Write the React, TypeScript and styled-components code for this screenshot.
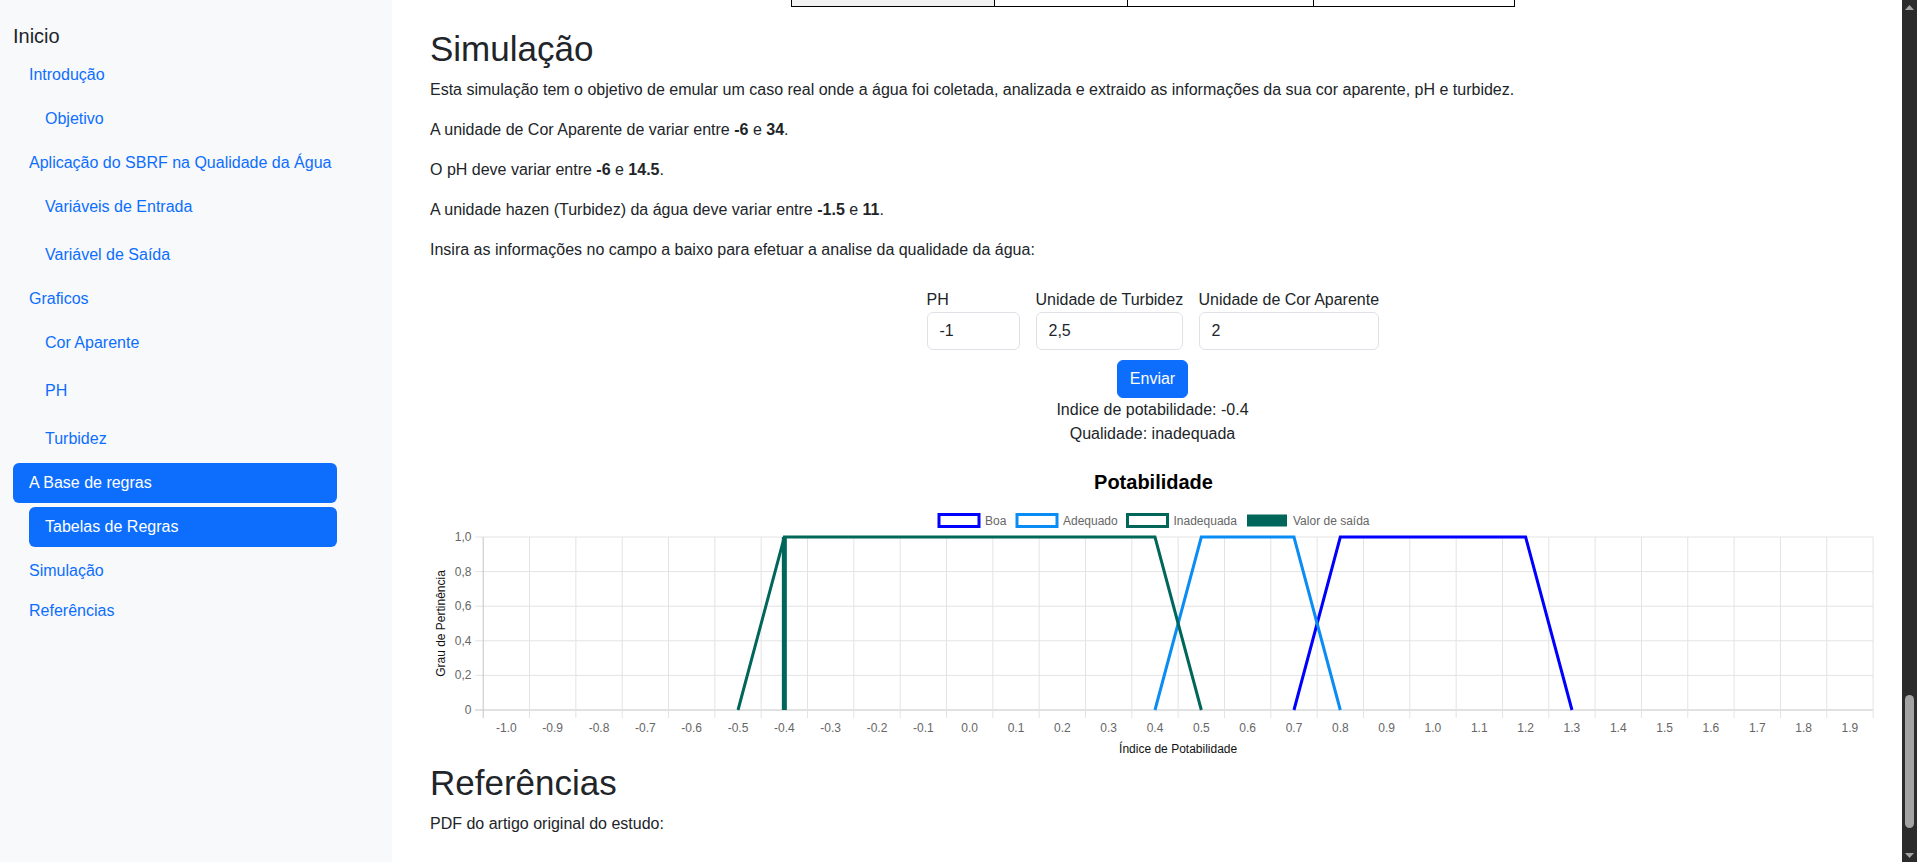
import React from 'react';
import styled, { createGlobalStyle } from 'styled-components';

const GlobalStyle = createGlobalStyle`
  html, body {
    margin: 0;
    padding: 0;
    overflow: hidden;
  }
  body {
    font-family: "Liberation Sans", Arial, sans-serif;
    font-size: 16px;
    line-height: 24px;
    color: #212529;
    background: #fff;
  }
  * {
    box-sizing: border-box;
  }
`;

const Page = styled.div`
  display: flex;
  width: 1917px;
  height: 862px;
  overflow: hidden;
`;

const Sidebar = styled.nav`
  flex: none;
  width: 392px;
  background: #f8f9fa;
  padding: 21px 55px 0 13px;
`;

const Brand = styled.div`
  font-size: 20px;
  line-height: 30px;
  margin-bottom: 4px;
`;

const NavList = styled.div`
  display: flex;
  flex-direction: column;
`;

const NavLink = styled.a<{ $active?: boolean; $nested?: boolean }>`
  display: block;
  padding: 8px 16px;
  line-height: 24px;
  white-space: nowrap;
  border-radius: 6px;
  text-decoration: none;
  color: ${(p) => (p.$active ? '#fff' : '#0d6efd')};
  background: ${(p) => (p.$active ? '#0d6efd' : 'transparent')};
  margin: ${(p) => (p.$nested ? '4px 0 4px 16px' : '0')};
`;

const Main = styled.main`
  flex: 1;
  min-width: 0;
  padding: 0 27px 0 38px;
  overflow: hidden;
`;

const CutTable = styled.div`
  display: grid;
  grid-template-columns: 203px 133px 186px 201px;
  width: 724px;
  height: 7px;
  margin: 0 auto 21px;
  border-left: 1px solid #000;
  border-bottom: 1px solid #000;
`;

const CutCell = styled.div<{ $shade?: boolean }>`
  border-right: 1px solid #000;
  background: ${(p) => (p.$shade ? '#f2f2f2' : '#fff')};
`;

const SectionTitle = styled.h1`
  font-size: 35px;
  line-height: 42px;
  font-weight: 400;
  margin: 0 0 8px;
`;

const Para = styled.p`
  margin: 0 0 16px;
`;

const FormRow = styled.div`
  display: flex;
  justify-content: center;
  gap: 16px;
  margin-top: 26px;
`;

const Field = styled.label<{ $w: number }>`
  display: flex;
  flex-direction: column;
  width: ${(p) => p.$w}px;
  white-space: nowrap;
`;

const Input = styled.input`
  width: 100%;
  height: 38px;
  padding: 6px 12px;
  font: inherit;
  color: #212529;
  border: 1px solid #dee2e6;
  border-radius: 6px;
  background: #fff;
`;

const SubmitRow = styled.div`
  display: flex;
  justify-content: center;
  margin-top: 10px;
`;

const Button = styled.button`
  height: 38px;
  padding: 6px 12px;
  font: inherit;
  color: #fff;
  background: #0d6efd;
  border: 1px solid #0d6efd;
  border-radius: 6px;
`;

const Result = styled.div`
  text-align: center;
`;

const ChartBox = styled.svg`
  display: block;
  margin-top: 14px;
  font-family: "Liberation Sans", Arial, sans-serif;
`;

const ScrollTrack = styled.div`
  flex: none;
  width: 15px;
  background: #2b2b2b;
  display: flex;
  flex-direction: column;
  align-items: center;
  padding: 5px 0 4px;
`;

const ScrollThumb = styled.div`
  width: 9px;
  height: 133px;
  margin-top: auto;
  margin-bottom: 25px;
  border-radius: 5px;
  background: #a3a3a3;
`;

const PL = 53.2;
const PR = 1443.1;
const PT = 77;
const PB = 250;
const N = 30;
const CW = (PR - PL) / N;

const xAt = (v: number) => PL + CW * (Math.round((v + 1) * 10) + 0.5);
const yAt = (m: number) => PB - m * (PB - PT);

const series = [
  { name: 'Boa', color: '#0000ff', pts: [[0.7, 0], [0.8, 1], [1.2, 1], [1.3, 0]] },
  { name: 'Adequado', color: '#0a8cf5', pts: [[0.4, 0], [0.5, 1], [0.7, 1], [0.8, 0]] },
  { name: 'Inadequada', color: '#00665a', pts: [[-0.5, 0], [-0.4, 1], [0.4, 1], [0.5, 0]] },
];

const legend = [
  { x: 509, text: 'Boa', color: '#0000ff', filled: false },
  { x: 587, text: 'Adequado', color: '#0a8cf5', filled: false },
  { x: 697.5, text: 'Inadequada', color: '#00665a', filled: false },
  { x: 817, text: 'Valor de saída', color: '#00665a', filled: true },
];

const PotabilityChart = () => {
  const ticks = Array.from({ length: N }, (_, i) => (-1 + i * 0.1).toFixed(1));
  const yTicks = ['1,0', '0,8', '0,6', '0,4', '0,2', '0'];
  return (
    <ChartBox width={1445} height={302}>
      <text x={723.5} y={29} textAnchor="middle" fontSize={20} fontWeight="bold" fill="#000">
        Potabilidade
      </text>
      {legend.map((l) => (
        <g key={l.text}>
          <rect
            x={l.x}
            y={54.5}
            width={40}
            height={12}
            fill={l.filled ? l.color : '#fff'}
            stroke={l.color}
            strokeWidth={l.filled ? 0 : 3}
          />
          <text x={l.x + 46} y={65} fontSize={12} fill="#666">
            {l.text}
          </text>
        </g>
      ))}
      {yTicks.map((t, i) => {
        const y = PT + (i * (PB - PT)) / 5;
        return (
          <g key={t}>
            <line x1={PL - 8} x2={PR} y1={y} y2={y} stroke={i === 5 ? '#c4c4c4' : '#e3e3e3'} />
            <text x={41.4} y={y + 4} textAnchor="end" fontSize={12} fill="#666">
              {t}
            </text>
          </g>
        );
      })}
      {Array.from({ length: N + 1 }, (_, i) => (
        <line
          key={i}
          x1={PL + CW * i}
          x2={PL + CW * i}
          y1={PT}
          y2={PB + 8}
          stroke={i === 0 ? '#c4c4c4' : '#e3e3e3'}
        />
      ))}
      {ticks.map((t, i) => (
        <text key={t} x={PL + CW * (i + 0.5)} y={272} textAnchor="middle" fontSize={12} fill="#666">
          {t}
        </text>
      ))}
      <text
        transform={`translate(15 ${(PT + PB) / 2}) rotate(-90)`}
        textAnchor="middle"
        fontSize={12}
        fill="#111"
      >
        Grau de Pertinência
      </text>
      <text x={(PL + PR) / 2} y={292.5} textAnchor="middle" fontSize={12} fill="#111">
        Índice de Potabilidade
      </text>
      <rect x={xAt(-0.4) - 2.5} y={yAt(1)} width={5} height={PB - PT} fill="#00665a" />
      {series.map((s) => (
        <polyline
          key={s.name}
          points={s.pts.map(([v, m]) => `${xAt(v)},${yAt(m)}`).join(' ')}
          fill="none"
          stroke={s.color}
          strokeWidth={3}
        />
      ))}
    </ChartBox>
  );
};

const ScrollArrow = ({ down }: { down?: boolean }) => (
  <svg width={9} height={5} viewBox="0 0 9 5">
    <polygon points={down ? '0,0 9,0 4.5,5' : '0,5 9,5 4.5,0'} fill="#a3a3a3" />
  </svg>
);

export default function App() {
  return (
    <Page>
      <GlobalStyle />
      <Sidebar>
        <Brand>Inicio</Brand>
        <NavList>
          <NavLink href="#introducao">Introdução</NavLink>
          <NavLink href="#objetivo" $nested>Objetivo</NavLink>
          <NavLink href="#aplicacao">Aplicação do SBRF na Qualidade da Água</NavLink>
          <NavLink href="#entrada" $nested>Variáveis de Entrada</NavLink>
          <NavLink href="#saida" $nested>Variável de Saída</NavLink>
          <NavLink href="#graficos">Graficos</NavLink>
          <NavLink href="#cor" $nested>Cor Aparente</NavLink>
          <NavLink href="#ph" $nested>PH</NavLink>
          <NavLink href="#turbidez" $nested>Turbidez</NavLink>
          <NavLink href="#regras" $active>A Base de regras</NavLink>
          <NavLink href="#tabelas" $active $nested>Tabelas de Regras</NavLink>
          <NavLink href="#simulacao">Simulação</NavLink>
          <NavLink href="#referencias">Referências</NavLink>
        </NavList>
      </Sidebar>
      <Main>
        <CutTable>
          <CutCell $shade />
          <CutCell />
          <CutCell />
          <CutCell />
        </CutTable>
        <SectionTitle id="simulacao">Simulação</SectionTitle>
        <Para>
          Esta simulação tem o objetivo de emular um caso real onde a água foi coletada, analizada e extraido as
          informações da sua cor aparente, pH e turbidez.
        </Para>
        <Para>
          A unidade de Cor Aparente de variar entre <b>-6</b> e <b>34</b>.
        </Para>
        <Para>
          O pH deve variar entre <b>-6</b> e <b>14.5</b>.
        </Para>
        <Para>
          A unidade hazen (Turbidez) da água deve variar entre <b>-1.5</b> e <b>11</b>.
        </Para>
        <Para>Insira as informações no campo a baixo para efetuar a analise da qualidade da água:</Para>
        <FormRow>
          <Field $w={93}>
            PH
            <Input defaultValue="-1" />
          </Field>
          <Field $w={147}>
            Unidade de Turbidez
            <Input defaultValue="2,5" />
          </Field>
          <Field $w={180}>
            Unidade de Cor Aparente
            <Input defaultValue="2" />
          </Field>
        </FormRow>
        <SubmitRow>
          <Button type="button">Enviar</Button>
        </SubmitRow>
        <Result>Indice de potabilidade: -0.4</Result>
        <Result>Qualidade: inadequada</Result>
        <PotabilityChart />
        <SectionTitle id="referencias">Referências</SectionTitle>
        <Para>PDF do artigo original do estudo:</Para>
      </Main>
      <ScrollTrack>
        <ScrollArrow />
        <ScrollThumb />
        <ScrollArrow down />
      </ScrollTrack>
    </Page>
  );
}
